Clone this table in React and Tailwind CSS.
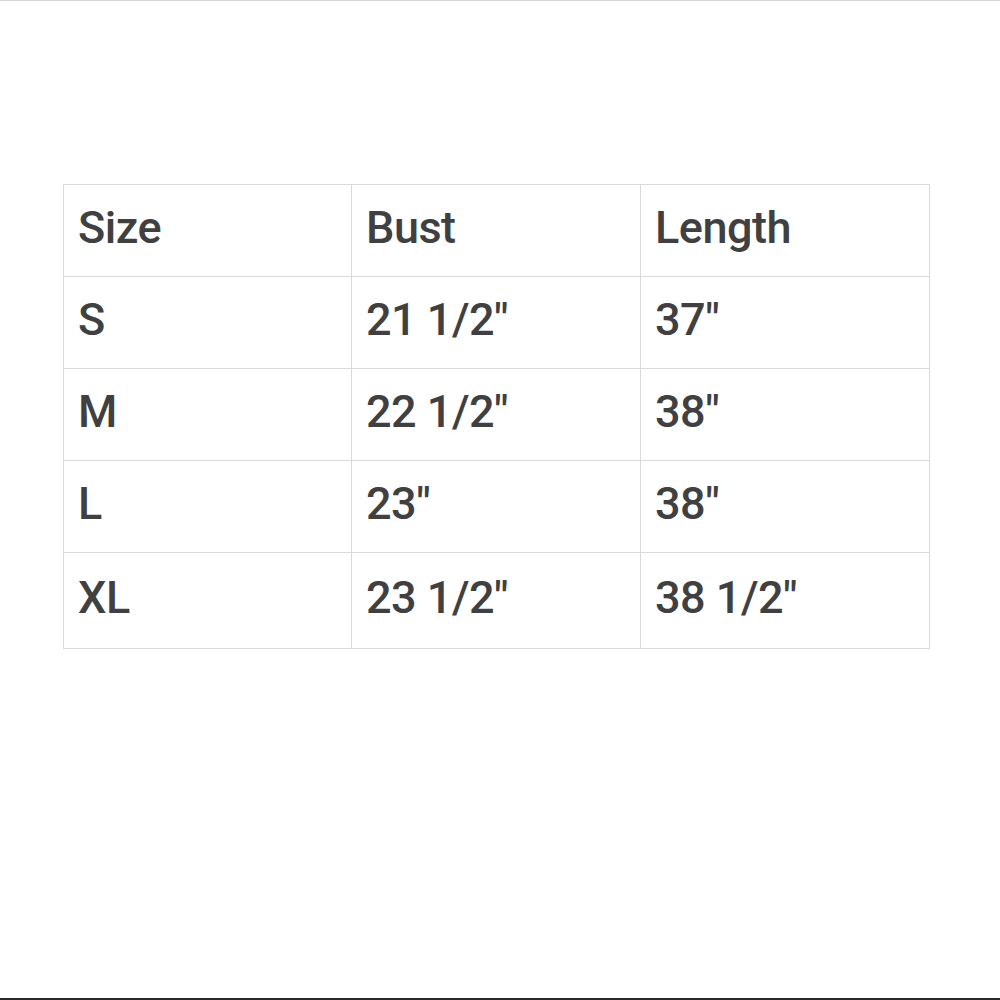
import React from 'react'

const rows = [
  ['Size', 'Bust', 'Length'],
  ['S', '21 1/2″', '37″'],
  ['M', '22 1/2″', '38″'],
  ['L', '23″', '38″'],
  ['XL', '23 1/2″', '38 1/2″'],
]

export default function App() {
  return (
    <div className="w-[1000px] h-[1000px] bg-white flex flex-col" style={{ fontFamily: 'Roboto, "Liberation Sans", sans-serif' }}>
      <div className="h-px bg-[#d4d4d4]" />
      <div className="flex-1 pt-[183px] pl-[63px]">
        <div className="w-[867px] border-t border-l border-[#d9d9d9]">
          {rows.map((r, i) => (
            <div key={i} className={`grid grid-cols-[288px_289px_289px] ${i === rows.length - 1 ? 'h-[96px]' : 'h-[92px]'}`}>
              {r.map((c, j) => (
                <div key={j} className="border-r border-b border-[#d9d9d9] flex items-center pl-[14px] text-[45px] font-medium text-[#404040] tracking-[-0.5px] pb-[6px]">
                  {c}
                </div>
              ))}
            </div>
          ))}
        </div>
      </div>
      <div className="h-[2px] bg-[#2a2a2a]" />
    </div>
  )
}
